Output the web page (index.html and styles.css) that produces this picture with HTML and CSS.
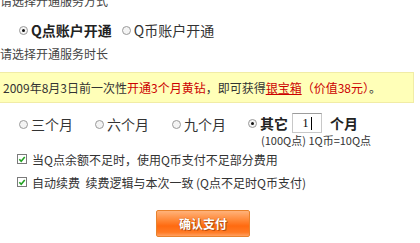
FILE: index.html
```html
<!DOCTYPE html>
<html>
<head>
<meta charset="utf-8">
<link rel="stylesheet" href="styles.css">
</head>
<body>
<div class="page">
  <div class="label first">请选择开通服务方式</div>
  <div class="typerow">
    <span class="opt"><span class="radio on"></span><span class="big bold">Q点账户开通</span></span>
    <span class="opt"><span class="radio"></span><span class="big">Q币账户开通</span></span>
  </div>
  <div class="label second">请选择开通服务时长</div>
  <div class="notice">2009年8月3日前一次性<span class="red">开通3个月黄钻</span>，即可获得<a class="red link">银宝箱</a><span class="red">（价值38元）</span>。</div>
  <div class="monthrow">
    <span class="opt m1"><span class="radio"></span><span class="big">三个月</span></span>
    <span class="opt m2"><span class="radio"></span><span class="big">六个月</span></span>
    <span class="opt m3"><span class="radio"></span><span class="big">九个月</span></span>
    <span class="other">
      <span class="otherline">
        <span class="opt"><span class="radio on"></span><span class="big bold">其它</span></span>
        <span class="inputbox">1<span class="caret"></span></span>
        <span class="big bold">个月</span>
      </span>
      <span class="sub">(100Q点) 1Q币=10Q点</span>
    </span>
  </div>
  <div class="check c1"><span class="box"><svg width="9" height="9" viewBox="0 0 9 9"><path d="M1.5 4.2 L3.6 6.4 L7.6 1.8" fill="none" stroke="#21a121" stroke-width="1.8"/></svg></span>当Q点余额不足时，使用Q币支付不足部分费用</div>
  <div class="check c2"><span class="box"><svg width="9" height="9" viewBox="0 0 9 9"><path d="M1.5 4.2 L3.6 6.4 L7.6 1.8" fill="none" stroke="#21a121" stroke-width="1.8"/></svg></span>自动续费&nbsp; 续费逻辑与本次一致 (Q点不足时Q币支付)</div>
  <div class="btnrow"><span class="btn">确认支付</span></div>
</div>
</body>
</html>
```
FILE: styles.css
```css
html, body { margin: 0; padding: 0; background: #fff; }
body { width: 420px; height: 243px; overflow: hidden; font-family: "SimSun", "Noto Sans CJK SC", "DejaVu Sans", sans-serif; color: #444; font-size: 12px; }
.page { position: relative; }
.label { height: 16px; line-height: 16px; white-space: nowrap; color: #444; }
.first { margin-top: -7px; }
.typerow { display: flex; align-items: center; height: 20px; margin-top: 11px; padding-left: 19px; gap: 10px; }
.opt { display: inline-flex; align-items: center; }
.radio { width: 9px; height: 9px; border: 1px solid #9a9a9a; border-radius: 50%; background: #f4f4f4; box-sizing: border-box; margin-right: 3px; position: relative; flex: none; }
.radio.on::after { content: ""; position: absolute; left: 2px; top: 2px; width: 3px; height: 3px; border-radius: 50%; background: #111; }
.big { font-size: 14px; line-height: 18px; color: #333; white-space: nowrap; }
.bold { font-weight: bold; color: #222; }
.second { margin-top: 6px; }
.notice { margin-top: 10px; width: 410px; height: 29px; line-height: 29px; background: #ffffb8; border: 1px solid #f1eca6; border-left: none; padding-left: 3px; white-space: nowrap; color: #333; box-sizing: content-box; }
.red { color: #cc0000; }
.link { text-decoration: underline; }
.monthrow { display: flex; align-items: flex-start; margin-top: 9px; padding-left: 19px; height: 34px; }
.m1 { width: 76px; margin-top: 3px; }
.m2 { width: 77px; margin-top: 3px; }
.m3 { width: 76px; margin-top: 3px; }
.other { display: flex; flex-direction: column; }
.otherline { display: flex; align-items: center; height: 22px; }
.inputbox { width: 30px; height: 20px; border: 1px solid #c8c8c8; border-top-color: #9c9c9c; box-sizing: border-box; margin-left: 4px; margin-right: 8px; font-family: "Liberation Serif", serif; font-size: 12px; line-height: 18px; text-align: center; color: #000; display: inline-flex; justify-content: center; align-items: center; }
.caret { width: 1px; height: 13px; background: #000; margin-left: 2px; }
.sub { font-size: 11px; line-height: 13px; color: #333; padding-left: 13px; white-space: nowrap; }
.check { display: flex; align-items: center; padding-left: 17px; height: 16px; white-space: nowrap; color: #333; }
.c1 { margin-top: 5px; }
.c2 { margin-top: 7px; }
.box { width: 10px; height: 10px; border: 1px solid #7a7a7a; box-sizing: border-box; background: #fff; margin-right: 5px; display: inline-flex; align-items: center; justify-content: center; flex: none; }
.box svg { display: block; }
.btnrow { display: flex; margin-top: 20px; padding-left: 156px; }
.btn { width: 94px; height: 27px; box-sizing: border-box; border: 1px solid #e8822c; border-radius: 2px; background: linear-gradient(#ffb27a 0%, #ff8a3a 35%, #ff6a10 60%, #ff7a24 85%, #ffa060 100%); color: #fff; font-weight: bold; font-size: 12px; line-height: 25px; text-align: center; text-shadow: 0 0 1px #a04000, 1px 1px 0 #c05010; }
```
